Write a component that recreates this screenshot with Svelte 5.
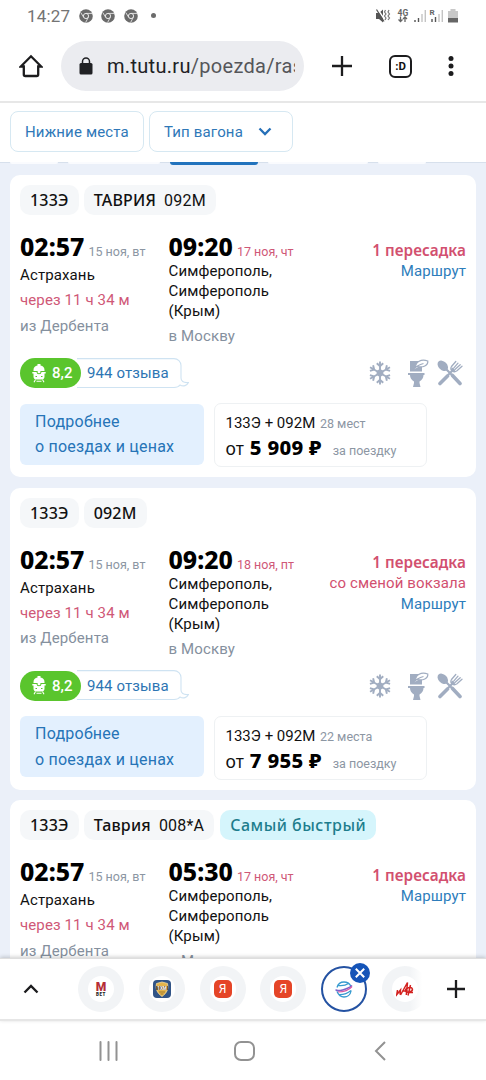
<script lang="ts">
	type Tag = { name?: string; code?: string; accent?: boolean };
	type Trip = {
		tags: Tag[];
		departure: string;
		arrival: string;
		date: string;
		stationChange?: boolean;
		target: string;
		seats: string;
		price: string;
	};

	const trips: Trip[] = [
		{
			tags: [{ name: '133Э' }, { name: 'ТАВРИЯ', code: '092М' }],
			departure: '02:57',
			arrival: '09:20',
			date: '17 ноя, чт',
			target: 'в Москву',
			seats: '28 мест',
			price: '5 909 ₽'
		},
		{
			tags: [{ name: '133Э' }, { name: '092М' }],
			departure: '02:57',
			arrival: '09:20',
			date: '18 ноя, пт',
			stationChange: true,
			target: 'в Москву',
			seats: '22 места',
			price: '7 955 ₽'
		},
		{
			tags: [{ name: '133Э' }, { name: 'Таврия', code: '008*А' }, { name: 'Самый быстрый', accent: true }],
			departure: '02:57',
			arrival: '05:30',
			date: '17 ноя, чт',
			target: 'в Москву',
			seats: '',
			price: ''
		}
	];

	const tabs = ['mbet', 'shield', 'ya', 'ya', 'tutu', 'alfa'];
</script>

<div class="screen">
	<div class="status">
		<span class="clock">14:27</span>
		{#each [0, 1, 2] as n (n)}
			<svg class="chrome" width="14" height="14" viewBox="0 0 14 14">
				<circle cx="7" cy="7" r="6.8" fill="#6b6b6b" />
				<circle cx="7" cy="7" r="2.6" fill="none" stroke="#e8e8e8" stroke-width="1" />
				<path d="M7 4.4h6M4.7 8.3L1.8 3.6M9.3 8.3L6.6 13.5" stroke="#e8e8e8" stroke-width=".9" />
			</svg>
		{/each}
		<i class="more-dot"></i>
		<svg class="indicators" width="86" height="18" viewBox="0 0 86 18">
			<path d="M1 6h3l4-3.500v13L4 12H1z" fill="#555" />
			<path d="M2.500 2l8 12" stroke="#fff" stroke-width="1.500" />
			<path d="M1.500 2.500l7.500 12" stroke="#555" stroke-width="1.200" />
			<path d="M10.500 3l-1 2 1.500 2-1.500 2 1.500 2-1 2M14 3l-1 2 1.500 2-1.500 2 1.500 2-1.500 2" fill="none" stroke="#777" stroke-width="1.200" />
			<text x="22.500" y="8.500" font-size="8.500" font-weight="700" fill="#666">4G</text>
			<path d="M25.500 9.500v5M23.500 12.500l2 2 2-2M30 15v-5M28 12l2-2 2 2" fill="none" stroke="#666" stroke-width="1.300" />
			<path d="M40 15v-2M43.500 15v-4" stroke="#555" stroke-width="1.400" />
			<path d="M47 15V7M50.300 15V3" stroke="#c4c4c4" stroke-width="1.400" />
			<text x="54.500" y="8" font-size="8" font-weight="700" fill="#666">R</text>
			<path d="M57 15v-3M60.500 15v-5" stroke="#555" stroke-width="1.400" />
			<path d="M64 15V7M67.300 15V3" stroke="#c4c4c4" stroke-width="1.400" />
			<path d="M73 4h2.500V2h5v2H83v8H73z" fill="#c8c8c8" />
			<path d="M73 11h10v4.500H73z" fill="#666" />
		</svg>
	</div>

	<div class="toolbar">
		<svg class="home" width="24" height="24" viewBox="0 0 24 24">
			<path d="M1.800 12.500L12 2.300l10.200 10.200h-3v8a1.500 1.500 0 0 1-1.500 1.500H6.300a1.500 1.500 0 0 1-1.500-1.500v-8z" fill="none" stroke="#1c1c1e" stroke-width="2.300" />
		</svg>
		<div class="address">
			<svg width="14" height="18" viewBox="0 0 14 18">
				<rect x="0.500" y="6" width="13" height="11.500" rx="1.500" fill="#202124" />
				<path d="M3.500 7V4.500a3.500 3.500 0 0 1 7 0V7" fill="none" stroke="#202124" stroke-width="1.500" />
			</svg>
			<span class="url"><b>m.tutu.ru</b>/poezda/ras</span>
		</div>
		<svg class="new" width="20" height="20" viewBox="0 0 20 20">
			<path d="M10 0v20M0 10h20" stroke="#1c1c1e" stroke-width="2.300" />
		</svg>
		<div class="switcher">:D</div>
		<svg class="menu" width="6" height="20" viewBox="0 0 6 20" fill="#1c1c1e">
			<circle cx="3" cy="2.500" r="2.500" /><circle cx="3" cy="10" r="2.500" /><circle cx="3" cy="17.500" r="2.500" />
		</svg>
	</div>

	<div class="filters">
		<button class="lower">Нижние места</button>
		<button class="type">
			Тип вагона
			<svg width="14" height="9" viewBox="0 0 14 9">
				<path d="M1.500 1.500L7 7l5.500-5.500" fill="none" stroke="#2670b8" stroke-width="2.300" />
			</svg>
		</button>
	</div>

	<main>
		<div class="sort"><i></i><i></i><i class="active"></i><i></i><i></i></div>
		{#each trips as trip, i (i)}
			<article>
				<div class="tags">
					{#each trip.tags as tag}
						<span class="tag" class:accent={tag.accent}>
							{tag.name}{#if tag.code}<span class="code">{tag.code}</span>{/if}
						</span>
					{/each}
				</div>
				<div class="route">
					<div class="from">
						<div class="when"><strong>{trip.departure}</strong><small>15 ноя, вт</small></div>
						<div>Астрахань</div>
						<div class="red">через 11 ч 34 м</div>
						<div class="gray">из Дербента</div>
					</div>
					<div class="to">
						<div class="when"><strong>{trip.arrival}</strong><small class="red">{trip.date}</small></div>
						<div>Симферополь,<br />Симферополь<br />(Крым)</div>
						<div class="gray">{trip.target}</div>
					</div>
					<div class="transfer">
						<div class="count">1 пересадка</div>
						{#if trip.stationChange}<div class="change">со сменой вокзала</div>{/if}
						<a href="#route">Маршрут</a>
					</div>
				</div>
				<!-- the last card ends under the tab strip -->
				{#if trip.price}
					<div class="info">
						<div class="score">
							<svg width="14" height="19" viewBox="0 0 14 19" fill="#fff">
								<path d="M5.500 0h3v1.500c2.500.3 4 2 4 4.500v1h-11V6c0-2.500 1.500-4.200 4-4.500z" />
								<path d="M.3 8h4.200a2.500 2.200 0 0 0 5 0h4.200v1.500h-1.200v3c0 2-1 3-3 3h-5c-2 0-3-1-3-3v-3H.3z" />
								<circle cx="7" cy="7.700" r="1.500" />
								<path d="M3.500 15.500L2 18.300M10.500 15.500l1.500 2.800M4.500 17.300h5" stroke="#fff" stroke-width="1.100" />
								<path d="M3.500 12.500H5M9 12.500h1.500" stroke="#5ac52d" />
							</svg>
							8,2
						</div>
						<div class="reviews">
							<svg width="112" height="31" viewBox="0 0 112 31" fill="none" stroke="#cfe3f2" stroke-width="1.100">
								<path d="M0 .6h97a7 7 0 0 1 7 7V20c0 3 2 5 7.500 4.500-1.500 3-5 4.500-8.500 2.500-1.500 2-4 2.500-6 2.500H0" />
							</svg>
							<span>944 отзыва</span>
						</div>
						<div class="services">
							<svg width="24" height="26" viewBox="0 0 24 26" fill="none" stroke="#a1adc1" stroke-width="1.900">
								{#each [0, 60, 120, 180, 240, 300] as angle (angle)}
									<path transform="rotate({angle} 12 13)" d="M12 13V1.500M8.800 3.200L12 6.300l3.200-3.100" />
								{/each}
								<circle cx="12" cy="13" r="2.500" />
							</svg>
							<svg class="toilet" width="22" height="30" viewBox="0 0 22 30">
								<path d="M3 3h12v10.500H3zM1 15h16.500v2h-1c0 3-1.500 5-4 6.500V25l1 4H6l1-4v-1.500C4.500 22 3 20 3 17H1z" fill="#a1adc1" />
								<path d="M8.500 9.500C8.500 4 14 .5 20.800 3c.5 4.500-5 7-10.300 5.500M7 11.500C9 8.500 12 6.500 16.500 5.500" fill="#fff" stroke="#a1adc1" stroke-width="1.200" />
							</svg>
							<svg width="26" height="26" viewBox="0 0 26 26" fill="none" stroke="#a1adc1">
								<ellipse cx="5.800" cy="5.800" rx="4.300" ry="6" transform="rotate(-45 5.800 5.800)" fill="#a1adc1" stroke="none" />
								<path d="M8 8l7 7M11 15l5-5" stroke-width="2.200" />
								<path d="M15.500 15.500l7.500 8M10.500 16L3 23.500" stroke-width="3.600" stroke-linecap="round" />
								<path d="M18.800 1.500l-4.300 5c-1.200 2-.5 3.500 1 4.500 1.500 1.200 3 .8 4.500-.3l5-4.400M21 3.200l-4.300 5M23.200 4.800l-5 4.500" stroke-width="1.300" stroke-linecap="round" />
								<path d="M14.500 8.500l3.200 2.500" stroke-width="2.500" />
							</svg>
						</div>
					</div>
					<div class="bottom">
						<button class="details">Подробнее<br />о поездах и ценах</button>
						<div class="offer">
							<div class="trains">133Э + 092М <small>{trip.seats}</small></div>
							<div class="price"><span>от</span> <strong>{trip.price}</strong> <small>за поездку</small></div>
						</div>
					</div>
				{/if}
			</article>
		{/each}
	</main>

	<div class="tabs">
		<svg class="up" width="16" height="10" viewBox="0 0 16 10">
			<path d="M1.500 8.500L8 2l6.500 6.500" fill="none" stroke="#1c1c1e" stroke-width="2.400" />
		</svg>
		{#each tabs as tab, i (i)}
			<div class="tab" class:current={tab === 'tutu'} class:faded={tab === 'alfa'}>
				<div class="favicon">
					{#if tab === 'mbet'}
						<div class="mbet"><b>M</b><span>BET</span></div>
					{:else if tab === 'shield'}
						<svg width="18" height="18" viewBox="0 0 18 18">
							<rect width="18" height="18" rx="4" fill="#315486" />
							<path d="M3.500 3.500L9 2l5.500 1.500c1 5 0 9-5.500 13-5.500-4-6.500-8-5.500-13z" fill="#e4b44b" stroke="#f3db9c" stroke-width=".8" />
							<path d="M3 6h12v4H3z" fill="#74592c" />
							<text x="9" y="9.700" font-size="4.500" font-weight="700" text-anchor="middle" fill="#fff">1XM</text>
							<path d="M6 12h6M7.500 14h3" stroke="#a17a2b" />
						</svg>
					{:else if tab === 'ya'}
						<div class="ya">Я</div>
					{:else if tab === 'tutu'}
						<svg width="18" height="17" viewBox="0 0 18 17" fill="none" stroke="#389bd0" stroke-width="1.300">
							<path d="M2 6.500C3 3 6 1 9 1s5.500 1.500 6.800 4M2 10.500c1.500 3.500 4 5.500 7 5.500s6.500-2 7.200-6.500M3.500 4.500c4.500.5 7.500-.3 10-2M3.500 13.500c5 .3 9-1 12.500-4" />
							<path d="M.8 8.500c.5 3 12.500-.5 16.200-4" stroke="#7c62c9" stroke-width="1.600" />
							<path d="M3 11c6 0 11-2 14-5.500" stroke="#d65aa4" stroke-width="1.200" />
						</svg>
					{:else}
						<svg width="18" height="16" viewBox="0 0 18 16" fill="none" stroke="#d3211f" stroke-width="1.500">
							<path d="M1.500 9L.8 13.500 4.500 9 4 13.500M4.500 14L11.500 1.500l-1.200 12.500M6.800 10h5" />
							<ellipse cx="13" cy="8.800" rx="3.500" ry="2.200" transform="rotate(-15 13 8.800)" />
							<path d="M14.500 4L12 14.500M12 11.500h5" />
						</svg>
					{/if}
				</div>
				{#if tab === 'tutu'}
					<svg class="close" width="20" height="20" viewBox="0 0 20 20">
						<circle cx="10" cy="10" r="10" fill="#1554b8" />
						<path d="M5.800 5.800l8.400 8.400M14.200 5.800l-8.400 8.400" stroke="#fff" stroke-width="2" />
					</svg>
				{/if}
			</div>
		{/each}
		<svg class="add" width="18" height="18" viewBox="0 0 18 18">
			<path d="M9 0v18M0 9h18" stroke="#1c1c1e" stroke-width="2.300" />
		</svg>
	</div>

	<nav>
		<svg width="19" height="20" viewBox="0 0 19 20"><path d="M1.500 1v18M9.500 1v18M17.500 1v18" stroke="#929292" stroke-width="2" stroke-linecap="round" /></svg>
		<svg width="21" height="20" viewBox="0 0 21 20"><rect x="1" y="1" width="19" height="18" rx="6" fill="none" stroke="#929292" stroke-width="2" /></svg>
		<svg width="12" height="20" viewBox="0 0 12 20"><path d="M11 1L2 10l9 9" fill="none" stroke="#929292" stroke-width="2" /></svg>
	</nav>
</div>

<style>
	:global(body) {
		margin: 0;
	}

	.screen {
		display: flex;
		flex-direction: column;
		width: 486px;
		height: 1080px;
		overflow: hidden;
		background: #fff;
		color: #111;
		font-family: Roboto, sans-serif;
		font-size: 15px;
	}

	svg {
		display: block;
		flex: none;
	}

	button {
		margin: 0;
		font: inherit;
		box-sizing: border-box;
		cursor: pointer;
	}

	.status {
		display: flex;
		align-items: center;
		height: 31px;
		flex: none;
		padding: 0 25px 0 27px;
		color: #747474;
	}

	.clock {
		width: 52px;
		font-size: 17px;
		letter-spacing: 0.2px;
	}

	.chrome {
		margin-right: 8.3px;
	}

	.more-dot {
		width: 5px;
		height: 5px;
		margin-left: 5px;
		border-radius: 50%;
		background: #6b6b6b;
	}

	.indicators {
		margin-left: auto;
	}

	.toolbar {
		display: flex;
		align-items: center;
		height: 70px;
		flex: none;
		border-bottom: 2px solid #e7e7e7;
	}

	.home {
		margin-left: 19px;
	}

	.address {
		display: flex;
		align-items: center;
		box-sizing: border-box;
		width: 243px;
		height: 50px;
		margin-left: 18px;
		padding: 0 9px 0 18px;
		border-radius: 25px;
		background: #ebecf0;
	}

	.url {
		flex: 1;
		margin-left: 14px;
		overflow: hidden;
		color: #55565a;
		font-size: 20px;
		letter-spacing: 0.3px;
		white-space: nowrap;
	}

	.url b {
		color: #202124;
		font-weight: 400;
	}

	.new {
		margin-left: 28px;
	}

	.switcher {
		box-sizing: border-box;
		width: 23px;
		height: 23px;
		margin-left: 37px;
		border: 2.4px solid #1c1c1e;
		border-radius: 6px;
		font-size: 11.5px;
		font-weight: 700;
		line-height: 18px;
		text-align: center;
	}

	.menu {
		margin-left: 36px;
	}

	.filters {
		display: flex;
		gap: 5px;
		box-sizing: border-box;
		height: 59px;
		flex: none;
		padding: 8px 10px;
	}

	.filters button {
		display: flex;
		align-items: center;
		height: 41px;
		padding: 0 15px;
		border: 1px solid #d6e8f2;
		border-radius: 8px;
		background: #fff;
		color: #2f78b8;
		letter-spacing: 0.15px;
	}

	.filters .lower {
		width: 134px;
		padding: 0 14px;
		white-space: nowrap;
	}

	.filters .type {
		width: 144px;
		justify-content: space-between;
		padding: 0 20px 0 14px;
	}

	main {
		flex: 1;
		min-height: 0;
		overflow: hidden;
		padding: 0 10px;
		background: #ebf0f9;
		box-shadow: inset 0 1px #d7e0ec;
	}

	.sort {
		display: flex;
		gap: 10px;
		height: 13px;
	}

	.sort i {
		width: 48px;
		height: 2px;
		border-radius: 0 0 8px 8px;
		background: #fafbfe;
	}

	.sort i:nth-child(2) {
		width: 92px;
	}

	.sort i:nth-child(4) {
		width: 100px;
	}

	.sort .active {
		width: 88px;
		height: 3px;
		background: #2273bd;
	}

	article {
		box-sizing: border-box;
		height: 302px;
		margin-bottom: 10.5px;
		padding: 10px;
		border-radius: 10px;
		background: #fff;
	}

	.tags {
		display: flex;
		gap: 5px;
		height: 30px;
	}

	.tag {
		padding: 0 10px;
		border-radius: 10px;
		background: #f5f7f9;
		font-family: 'Noto Sans', sans-serif;
		font-size: 16px;
		font-weight: 500;
		letter-spacing: 0.2px;
		line-height: 30px;
		white-space: nowrap;
	}

	.code {
		margin-left: 8px;
		font-family: Roboto, sans-serif;
		font-size: 16px;
		font-weight: 400;
		letter-spacing: 0.2px;
	}

	.accent {
		margin-left: 1px;
		background: #d5f5fc;
		color: #1d7d8d;
		letter-spacing: 0.5px;
	}

	.route {
		display: grid;
		grid-template-columns: 148.5px 1fr auto;
		height: 143px;
		padding-top: 15px;
		box-sizing: border-box;
		letter-spacing: 0.12px;
		line-height: 25.3px;
		white-space: nowrap;
	}

	.when {
		display: flex;
		align-items: baseline;
		gap: 4px;
		height: 32px;
		letter-spacing: 0;
		line-height: 32px;
	}

	.from .when {
		height: 33px;
	}

	.when strong {
		color: #000;
		font-family: 'Noto Sans', sans-serif;
		font-size: 24.8px;
		font-weight: 800;
	}

	small {
		color: #8c96a3;
		font-size: 12.5px;
	}

	.to {
		line-height: 20.2px;
	}

	.to .when {
		height: 31px;
	}

	.to .gray {
		margin-top: 4.5px;
	}

	.gray {
		color: #85909e;
	}

	.red {
		color: #cf5877;
	}

	.transfer {
		padding-top: 9.5px;
		line-height: 21px;
		text-align: right;
	}

	.count {
		color: #d2506f;
		font-family: 'Noto Sans', sans-serif;
		font-size: 15.3px;
		font-weight: 600;
		letter-spacing: 0.05px;
	}

	.change {
		color: #d2506f;
	}

	a {
		color: #2d7dbb;
		text-decoration: none;
	}

	.info {
		display: flex;
		align-items: center;
		height: 30px;
	}

	.score {
		display: flex;
		align-items: center;
		gap: 6px;
		z-index: 1;
		box-sizing: border-box;
		width: 61px;
		height: 30px;
		padding-left: 12px;
		border-radius: 15px;
		background: #5ac52d;
		color: #fff;
		font-size: 15px;
		font-weight: 500;
	}

	.reviews {
		display: grid;
		align-items: center;
		width: 112px;
		margin-left: -4px;
		color: #2d75b3;
		letter-spacing: 0.12px;
	}

	.reviews > * {
		grid-area: 1 / 1;
	}

	.reviews span {
		padding-left: 10px;
	}

	.services {
		display: flex;
		align-items: center;
		gap: 15px;
		margin-left: auto;
		margin-right: 3px;
	}

	.toilet {
		margin: 0 -7px 0 0;
	}

	.bottom {
		display: flex;
		gap: 10px;
		padding-top: 15px;
	}

	.details {
		width: 184px;
		height: 61px;
		margin-top: 0.5px;
		padding: 0 15px;
		border: 0;
		border-radius: 6px;
		background: #e3f0fe;
		color: #2674b7;
		font-size: 16px;
		letter-spacing: 0.23px;
		line-height: 25.5px;
		text-align: left;
	}

	.offer {
		box-sizing: border-box;
		width: 213px;
		height: 64px;
		padding: 8px 10.5px;
		border: 1px solid #eef1f3;
		border-radius: 7px;
		white-space: nowrap;
	}

	.trains {
		line-height: 22px;
	}

	.trains small {
		margin-left: 1px;
	}

	.price {
		display: flex;
		align-items: baseline;
		line-height: 24px;
	}

	.price span {
		font-family: 'Noto Sans', sans-serif;
		font-size: 17.5px;
	}

	.price strong {
		margin-left: 6px;
		color: #000;
		font-family: 'Noto Sans', sans-serif;
		font-size: 20.3px;
		font-weight: 800;
		letter-spacing: 0.3px;
	}

	.price small {
		margin-left: auto;
		margin-right: 19px;
	}

	.tabs {
		display: flex;
		align-items: center;
		box-sizing: border-box;
		height: 63px;
		flex: none;
		z-index: 1;
		padding-left: 23px;
		border-top: 1px solid #dedede;
		border-bottom: 2px solid #e6e6e6;
		background: #fff;
		box-shadow: 0 -1px 4px #0003;
	}

	.up {
		margin-right: 39px;
	}

	.tab {
		position: relative;
		display: grid;
		place-items: center;
		box-sizing: border-box;
		width: 46px;
		height: 46px;
		flex: none;
		margin-right: 14.8px;
		border-radius: 50%;
		background: #f2f4f6;
	}

	.tab.current {
		border: 2.5px solid #2452a2;
		background: #fff;
	}

	.tab.faded {
		background: linear-gradient(90deg, #f2f4f6 60%, #fff 88%);
	}

	.favicon {
		display: grid;
		place-items: center;
		width: 26px;
		height: 26px;
		border-radius: 50%;
		background: #fff;
	}

	.mbet {
		display: grid;
		justify-items: center;
		color: #b62d37;
		font-size: 12px;
		line-height: 10px;
	}

	.mbet b {
		font-weight: 900;
	}

	.mbet span {
		color: #222;
		font-size: 4.5px;
		font-weight: 900;
		line-height: 5px;
		letter-spacing: 0.6px;
	}

	.ya {
		width: 18px;
		height: 18px;
		border-radius: 5px;
		background: #e54527;
		color: #fff;
		font-size: 12px;
		line-height: 18px;
		text-align: center;
	}

	.close {
		position: absolute;
		top: -5px;
		right: -5px;
	}

	.add {
		margin-left: 4px;
	}

	nav {
		display: flex;
		align-items: center;
		justify-content: space-between;
		height: 59px;
		flex: none;
		padding: 0 100px 0 98.5px;
	}

	nav svg:nth-child(2) {
		margin-right: 3px;
	}
</style>
